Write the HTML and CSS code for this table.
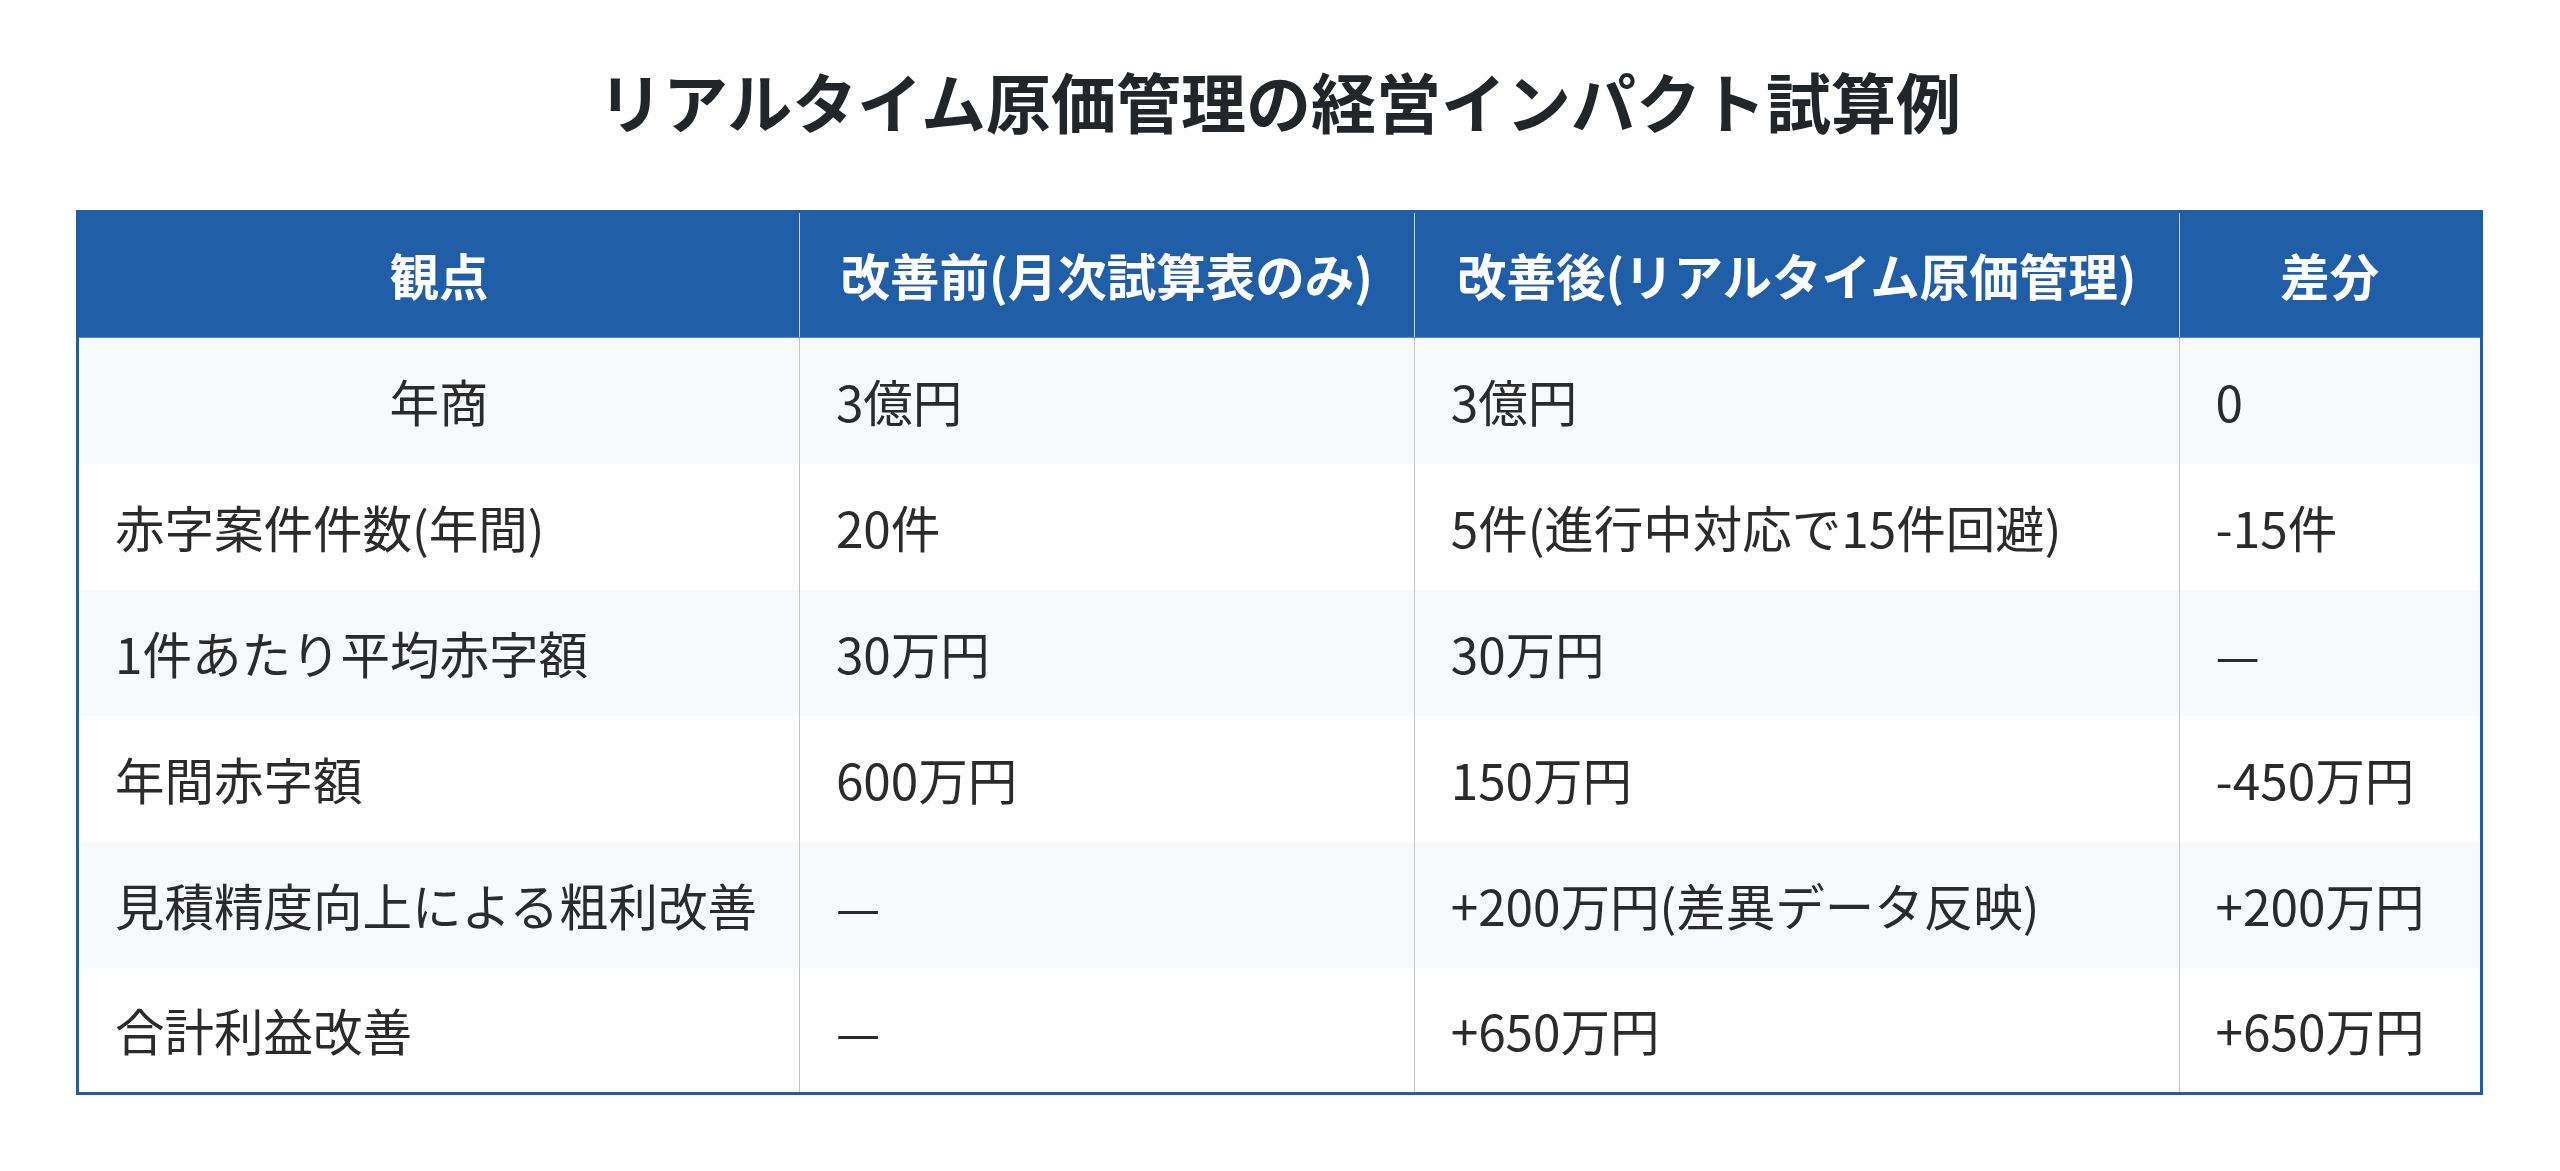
FILE: index.html
```html
<!DOCTYPE html>
<html lang="ja">
<head>
<meta charset="utf-8">
<title>リアルタイム原価管理の経営インパクト試算例</title>
<link rel="stylesheet" href="styles.css">
</head>
<body>
<main class="page">
  <h2 class="title">リアルタイム原価管理の経営インパクト試算例</h2>
  <table class="impact">
    <colgroup>
      <col class="c1"><col class="c2"><col class="c3"><col class="c4">
    </colgroup>
    <thead>
      <tr>
        <th>観点</th>
        <th>改善前(月次試算表のみ)</th>
        <th>改善後(リアルタイム原価管理)</th>
        <th>差分</th>
      </tr>
    </thead>
    <tbody>
      <tr><td class="center">年商</td><td>3億円</td><td>3億円</td><td>0</td></tr>
      <tr><td>赤字案件件数(年間)</td><td>20件</td><td>5件(進行中対応で15件回避)</td><td>-15件</td></tr>
      <tr><td>1件あたり平均赤字額</td><td>30万円</td><td>30万円</td><td>—</td></tr>
      <tr><td>年間赤字額</td><td>600万円</td><td>150万円</td><td>-450万円</td></tr>
      <tr><td>見積精度向上による粗利改善</td><td>—</td><td>+200万円(差異データ反映)</td><td>+200万円</td></tr>
      <tr><td>合計利益改善</td><td>—</td><td>+650万円</td><td>+650万円</td></tr>
    </tbody>
  </table>
</main>
</body>
</html>
```

FILE: styles.css
```css
html, body {
  margin: 0;
  padding: 0;
  background: #ffffff;
}

body {
  font-family: "Noto Sans CJK JP", "Noto Sans", sans-serif;
  color: #333333;
}

.page {
  padding: 62px 77px 0 76px;
}

.title {
  margin: 0 0 71px 0;
  text-align: center;
  font-size: 65px;
  line-height: 77px;
  font-weight: 700;
  color: #222529;
}

.impact {
  width: 2407px;
  border-collapse: collapse;
  table-layout: fixed;
  border: 3px solid #1f5fa8;
  font-size: 49.5px;
}

.c1 { width: 721px; }
.c2 { width: 614px; }
.c3 { width: 764px; }
.c4 { width: 302px; }

.impact th,
.impact td {
  height: 126px;
  padding: 0 20px 0 36px;
  box-sizing: border-box;
  line-height: 72px;
  vertical-align: middle;
  white-space: nowrap;
}

.impact th {
  background: #205fa8;
  color: #ffffff;
  font-weight: 700;
  text-align: center;
  padding: 0 20px;
  border-left: 1px solid #c9d6e8;
  border-right: 1px solid #c9d6e8;
  border-bottom: 1px solid #5d8cc6;
}

.impact td {
  text-align: left;
  font-weight: 400;
  color: #2b2b2b;
  border-left: 1px solid #c4c4c4;
  border-right: 1px solid #c4c4c4;
}

.impact td.center {
  text-align: center;
  padding: 0 36px;
}

.impact tbody tr:nth-child(odd) td {
  background: #f8f9fb;
}

.impact tbody tr:nth-child(even) td {
  background: #ffffff;
}
```
